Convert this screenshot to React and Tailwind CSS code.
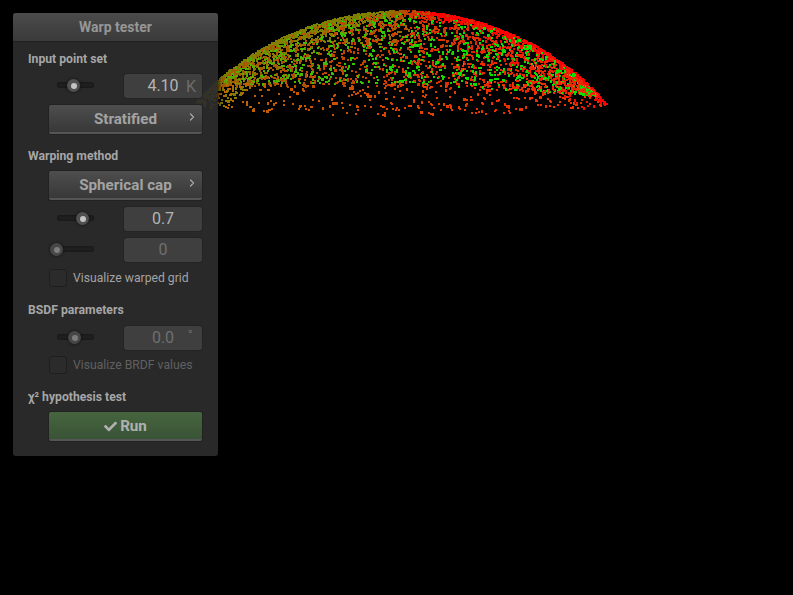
import React from 'react';
import { ChevronRight } from 'lucide-react';
import { FaCheck } from 'react-icons/fa';

// seeded random so the point cloud is the same on every load
const makeRandom = (seed) => () => {
    seed = (seed + 0x6d2b79f5) | 0;
    let t = Math.imul(seed ^ (seed >>> 15), 1 | seed);
    t = (t + Math.imul(t ^ (t >>> 7), 61 | t)) ^ t;
    return ((t ^ (t >>> 14)) >>> 0) / 4294967296;
};

const mix = (a, b, t) => {
    const k = Math.max(0, Math.min(1, t));
    return `rgb(${a.map((v, i) => Math.round(v + (b[i] - v) * k)).join(',')})`;
};

const topOf = (x) => 285 - Math.sqrt(Math.max(0, 275 * 275 - (x - 400) * (x - 400)));
const bottomOf = (x) => 104 + 11 * (1 - ((x - 400) / 207) ** 2);

const buildPoints = () => {
    const rnd = makeRandom(42);
    const points = [];
    const push = (x, y, fill) => {
        if (y > bottomOf(x) + 1) return;
        points.push({ x: Math.round(x), y: Math.round(y), w: rnd() < 0.15 ? 3 : 2, h: rnd() < 0.2 ? 3 : 2, fill });
    };

    // dense band under the silhouette, wider on the left
    for (let i = 0; i < 1700; i++) {
        const x = 195 + rnd() * 412;
        const scale = x < 400 ? 4.8 : 2.2;
        const d = -Math.log(1 - rnd()) * scale;
        push(x, topOf(x) + d, mix([128, 128, 0], [255, 0, 0], (x - 385) / 40));
    }
    // olive and red specks reaching further into the cap
    for (let i = 0; i < 650; i++) {
        const x = 200 + rnd() * 405;
        const d = rnd() * 32;
        push(x, topOf(x) + d, mix([135, 125, 0], [240, 15, 0], (x - 370) / 130));
    }
    // body of the cap, green and orange
    for (let i = 0; i < 2400; i++) {
        const x = 200 + rnd() * 405;
        const top = topOf(x) + 2;
        const t = (x - 200) / 405;
        if (rnd() < 0.42) {
            const low = 83 + 12 * Math.max(0, (x - 400) / 207);
            if (top >= low) continue;
            push(x, top + rnd() * (low - top), mix([105, 160, 0], [10, 225, 0], t * 1.5));
        } else {
            const low = 86 + 8 * Math.max(0, (x - 400) / 207);
            if (top >= low) continue;
            push(x, top + rnd() * (low - top), mix([150, 100, 0], [235, 40, 0], t * 1.4));
        }
    }
    // sparse lower rim
    for (let i = 0; i < 330; i++) {
        const x = 200 + rnd() * 405;
        const y = 82 + rnd() * (bottomOf(x) - 82);
        if (y > topOf(x)) push(x, y, mix([185, 105, 0], [235, 50, 0], (x - 200) / 300));
    }
    return points;
};

const POINTS = buildPoints();

const SectionLabel = ({ children, className = '' }) => (
    <div className={`ml-[15px] h-4 leading-4 text-[12.2px] font-bold text-[#a6a6a6] ${className}`}>{children}</div>
);

const Slider = ({ knob, track = 'ml-[8px] w-[37px]', disabled }) => (
    <div className="relative h-6 w-[75px] shrink-0">
        <div className={`absolute top-[8px] h-[6px] rounded-[3px] bg-[#1f1f1f] shadow-[inset_0_0_2px_#111] ${track}`} />
        <div
            className={`absolute top-[5px] size-[13px] rounded-full flex items-center justify-center shadow-[0_0_3px_#111] ${disabled ? 'bg-[#474747]' : 'bg-[#505050]'}`}
            style={{ left: knob }}
        >
            <div className={`size-[6px] rounded-full ${disabled ? 'bg-[#7d7d7d]' : 'bg-[#c4c4c4]'}`} />
        </div>
    </div>
);

const ValueBox = ({ children, disabled }) => (
    <div className={`flex h-6 w-[78px] items-center justify-center rounded-[3px] bg-[#3f3f3f] shadow-[0_0_0_1px_#242424] text-[16px] ${disabled ? 'text-[#6f6f6f]' : 'text-[#b4b4b4]'}`}>
        {children}
    </div>
);

const Row = ({ className = '', ...props }) => (
    <div className={`ml-[36px] flex items-center ${className}`}>
        <Slider knob={props.knob} track={props.track} disabled={props.disabled} />
        <ValueBox disabled={props.boxDisabled}>{props.children}</ValueBox>
    </div>
);

const PopupButton = ({ children, className = '' }) => (
    <div className={`relative ml-[36px] flex h-[29px] w-[153px] items-center justify-center rounded-[2px] bg-gradient-to-b from-[#4e4e4e] to-[#383838] border-b-2 border-[#555] pt-[2px] shadow-[0_0_0_1px_#222] text-[15.2px] font-bold text-[#a3a3a3] ${className}`}>
        {children}
        <ChevronRight className="absolute right-[4px] top-[6px] text-[#a8a8a8]" size={12} strokeWidth={2.5} />
    </div>
);

const CheckRow = ({ children, disabled, className = '' }) => (
    <div className={`ml-[36px] flex h-[18px] items-center gap-[6px] ${className}`}>
        <div className="size-[18px] rounded-[3px] bg-[#2b2b2b] border border-[#1e1e1e]" />
        <span className={`text-[12.2px] ${disabled ? 'text-[#606060]' : 'text-[#a3a3a3]'}`}>{children}</span>
    </div>
);

export default function App() {
    return (
        <div className="relative h-[595px] w-[793px] overflow-hidden bg-black" style={{ fontFamily: 'Roboto, sans-serif' }}>
            {/* point cloud viewport */}
            <svg className="absolute inset-0" width="793" height="595" shapeRendering="crispEdges">
                {POINTS.map((p, i) => (
                    <rect key={i} x={p.x} y={p.y} width={p.w} height={p.h} fill={p.fill} />
                ))}
            </svg>

            {/* floating window */}
            <div className="absolute left-[13px] top-[13px] h-[443px] w-[205px] rounded-[3px] bg-[#2c2c2c]/[0.93] shadow-[0_0_6px_#000]">
                <div className="flex h-[29px] items-center justify-center rounded-t-[3px] bg-gradient-to-b from-[#4b4b4b] to-[#3a3a3a] border-b border-[#1f1f1f] text-[14px] font-bold text-[#969696]">
                    Warp tester
                </div>

                <SectionLabel className="mt-[9px]">Input point set</SectionLabel>
                <div className="relative mt-[7px]">
                    <Row knob="18px">
                        <span className="mx-[20px]">4.10</span>
                    </Row>
                    <span className="absolute left-[173px] top-[1px] text-[16px] text-[#6d6d6d]">K</span>
                </div>
                <PopupButton className="mt-[7px]">Stratified</PopupButton>

                <SectionLabel className="mt-[14px]">Warping method</SectionLabel>
                <PopupButton className="mt-[7px]">Spherical cap</PopupButton>
                <Row className="mt-[7px]" knob="27px">0.7</Row>
                <Row className="mt-[7px]" knob="1px" track="ml-[6px] w-[39px]" disabled boxDisabled>0</Row>
                <CheckRow className="mt-[7px]">Visualize warped grid</CheckRow>

                <SectionLabel className="mt-[15px]">BSDF parameters</SectionLabel>
                <div className="relative mt-[8px]">
                    <Row knob="19px" disabled boxDisabled>0.0</Row>
                    <span className="absolute left-[175px] top-0 text-[12px] text-[#6d6d6d]">°</span>
                </div>
                <CheckRow className="mt-[6px]" disabled>Visualize BRDF values</CheckRow>

                <SectionLabel className="mt-[15px]">χ² hypothesis test</SectionLabel>
                <div className="ml-[36px] mt-[7px] flex h-[29px] w-[153px] items-center justify-center gap-[3px] rounded-[2px] bg-gradient-to-b from-[#47653f] to-[#395336] border-b-2 border-[#555] pt-[2px] shadow-[0_0_0_1px_#222] text-[15.2px] font-bold text-[#b0b0b0]">
                    <FaCheck size={13} />
                    Run
                </div>
            </div>
        </div>
    );
}
